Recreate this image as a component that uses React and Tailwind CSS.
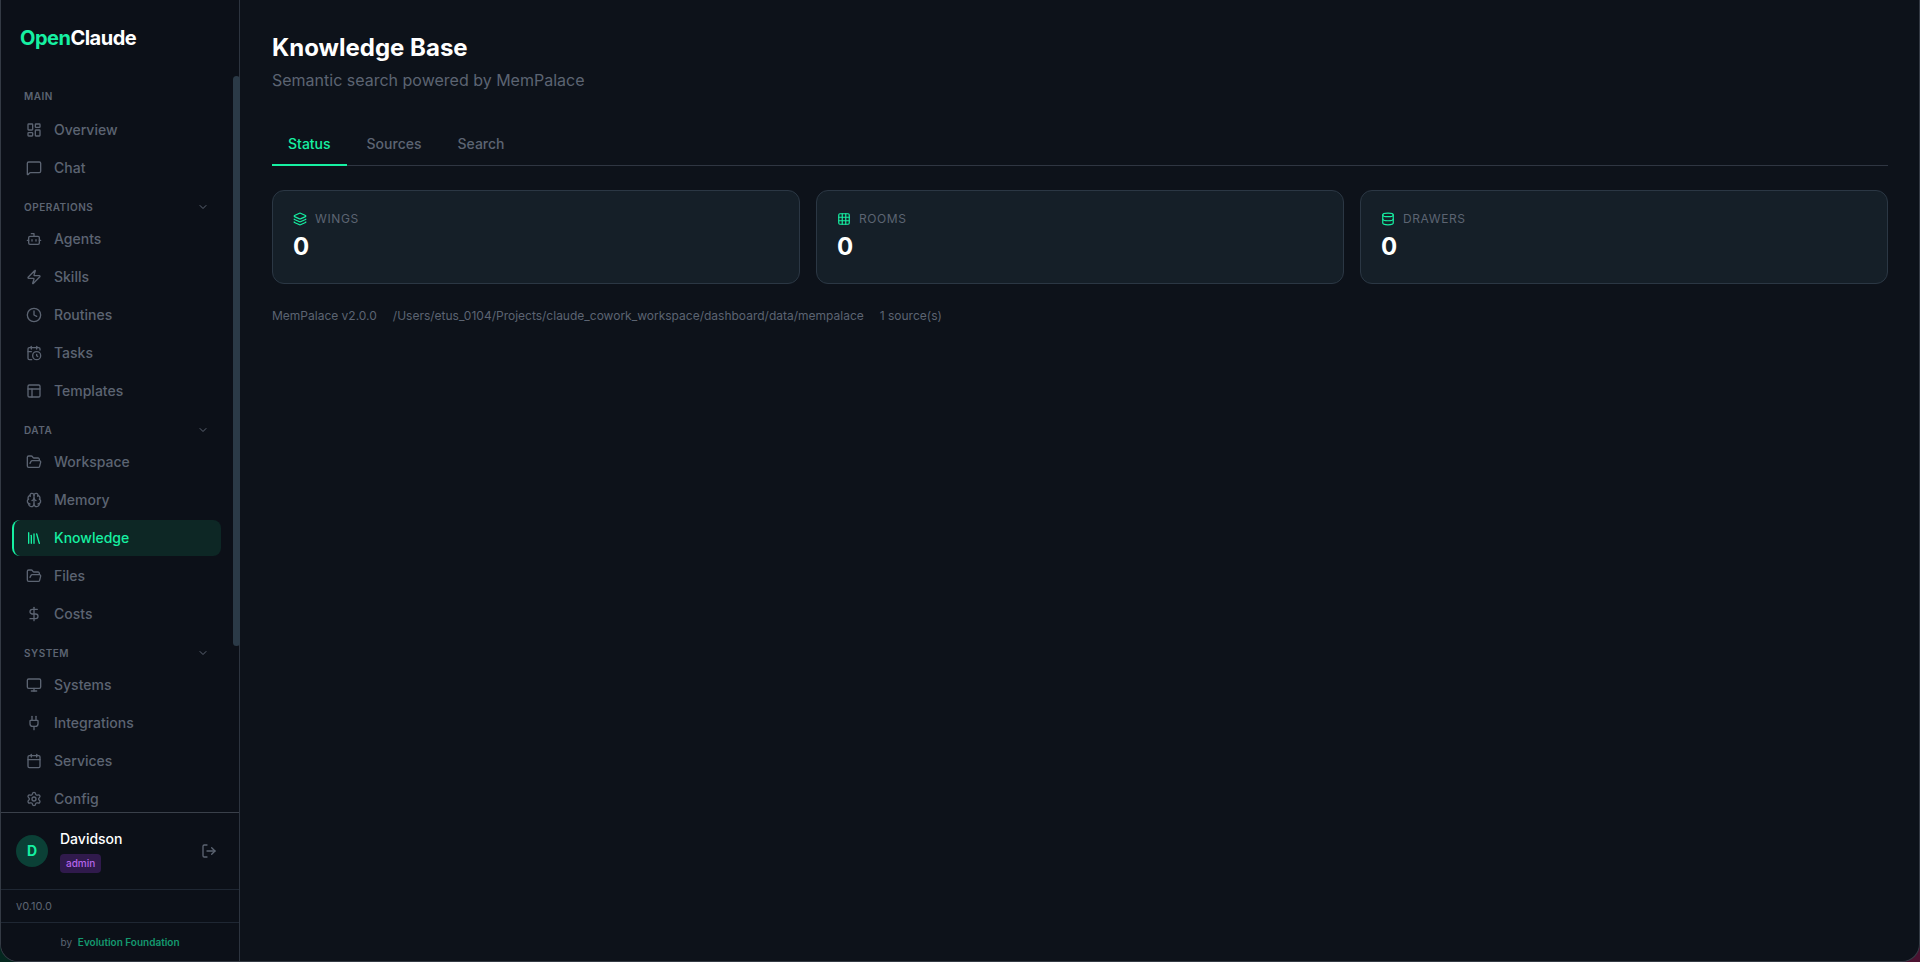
import { useState } from "react";
import {
  Bot,
  Brain,
  Calendar,
  CalendarClock,
  ChevronDown,
  Clock,
  Database,
  DollarSign,
  FolderOpen,
  Grid3x3,
  Layers,
  LayoutDashboard,
  Library,
  LogOut,
  MessageSquare,
  Monitor,
  PanelsTopLeft,
  Plug,
  Settings,
  Zap,
} from "lucide-react";

const navGroups = [
  {
    label: "Main",
    items: [
      { name: "Overview", icon: LayoutDashboard },
      { name: "Chat", icon: MessageSquare },
    ],
  },
  {
    label: "Operations",
    collapsible: true,
    items: [
      { name: "Agents", icon: Bot },
      { name: "Skills", icon: Zap },
      { name: "Routines", icon: Clock },
      { name: "Tasks", icon: CalendarClock },
      { name: "Templates", icon: PanelsTopLeft },
    ],
  },
  {
    label: "Data",
    collapsible: true,
    items: [
      { name: "Workspace", icon: FolderOpen },
      { name: "Memory", icon: Brain },
      { name: "Knowledge", icon: Library },
      { name: "Files", icon: FolderOpen },
      { name: "Costs", icon: DollarSign },
    ],
  },
  {
    label: "System",
    collapsible: true,
    items: [
      { name: "Systems", icon: Monitor },
      { name: "Integrations", icon: Plug },
      { name: "Services", icon: Calendar },
      { name: "Config", icon: Settings },
    ],
  },
];

const tabs = ["Status", "Sources", "Search"];

const stats = [
  { label: "Wings", value: 0, icon: Layers },
  { label: "Rooms", value: 0, icon: Grid3x3 },
  { label: "Drawers", value: 0, icon: Database },
];

const NavItem = ({ item, active }) => {
  const Icon = item.icon;
  return (
    <a
      href={`#${item.name.toLowerCase()}`}
      aria-current={active ? "page" : undefined}
      className={`flex items-center gap-3 px-3 py-2 rounded-lg border-l-2 text-sm font-medium ${
        active
          ? "border-[#16f0a2] bg-[#0d2725] text-[#16f0a2]"
          : "border-transparent text-[#5c6472] hover:text-gray-300"
      }`}
    >
      <Icon className="w-4 h-4" />
      {item.name}
    </a>
  );
};

const NavGroup = ({ group }) => {
  const [open, setOpen] = useState(true);

  return (
    <div>
      {group.collapsible ? (
        <button
          onClick={() => setOpen(!open)}
          aria-expanded={open}
          className="flex items-center justify-between w-full h-4 mt-[13px] mb-1.5 px-3 text-[10px] font-semibold uppercase tracking-wider text-[#5c6472]"
        >
          {group.label}
          <ChevronDown className="w-3 h-3" />
        </button>
      ) : (
        <p className="h-4 mt-3 mb-2 px-3 text-[10px] leading-4 font-semibold uppercase tracking-wider text-[#5c6472]">
          {group.label}
        </p>
      )}
      {open && (
        <div className="flex flex-col gap-0.5">
          {group.items.map((item) => (
            <NavItem
              key={item.name}
              item={item}
              active={item.name === "Knowledge"}
            />
          ))}
        </div>
      )}
    </div>
  );
};

const Sidebar = () => (
  <aside className="flex flex-col shrink-0 w-[239px] border-r border-[#2d343f] bg-[#0c1018]">
    <div className="px-[19px] py-6 text-xl font-bold tracking-tight text-white">
      <span className="text-[#16f0a2]">Open</span>Claude
    </div>

    <div className="flex flex-1 min-h-0">
      <nav className="flex-1 overflow-y-auto [scrollbar-width:none] pl-[11px] pr-3">
        {navGroups.map((group) => (
          <NavGroup key={group.label} group={group} />
        ))}
      </nav>
      {/* scroll thumb */}
      <div className="w-[7px] -mr-px h-[77.5%] rounded-full bg-[#2b3a47]" />
    </div>

    <div className="flex items-center gap-3 pl-[15px] pr-[22px] py-4 border-t border-[#3a404a]">
      <div className="flex items-center justify-center w-8 h-8 rounded-full bg-[#0b4036] text-sm font-bold text-[#16f0a2]">
        D
      </div>
      <div className="flex-1 flex flex-col items-start gap-[5px]">
        <p className="text-sm font-medium text-white">Davidson</p>
        <span className="h-[19px] px-1.5 rounded text-[10px] leading-[19px] font-medium bg-[#301a4c] text-[#b565ea]">
          admin
        </span>
      </div>
      <button aria-label="Log out" className="text-[#5c6472]">
        <LogOut className="w-4 h-4" />
      </button>
    </div>
    <p className="px-[15px] py-2 border-t border-[#1f2733] text-[11px] leading-4 text-[#5c6472]">
      v0.10.0
    </p>
    <p className="py-[11px] border-t border-[#1f2733] text-center text-[10px] leading-4 text-[#5c6472]">
      by{" "}
      <a href="#evolution" className="ml-[3px] font-semibold text-[#14996f]">
        Evolution Foundation
      </a>
    </p>
  </aside>
);

const StatCard = ({ stat }) => {
  const Icon = stat.icon;
  return (
    <div className="p-5 rounded-xl border border-[#2b3744] bg-[#151f28]">
      <div className="flex items-center gap-2 text-xs uppercase tracking-wider text-[#5c6472]">
        <Icon className="w-3.5 h-3.5 text-[#16f0a2]" />
        {stat.label}
      </div>
      <p className="mt-1 text-2xl font-bold text-white">{stat.value}</p>
    </div>
  );
};

const App = () => {
  const [tab, setTab] = useState("Status");

  return (
    <div className="h-screen bg-linear-to-r from-[#04271f] to-[#4a1230] font-['Inter',sans-serif]">
      <div className="flex h-full overflow-hidden rounded-b-[18px] border border-t-0 border-[#343a44] bg-[#0d121a]">
        <Sidebar />

        <main className="flex-1 py-8 pl-8 pr-[31px]">
          <h1 className="text-2xl font-bold text-white">Knowledge Base</h1>
          <p className="mt-1 text-base text-[#5c6472]">
            Semantic search powered by MemPalace
          </p>

          {/* Tabs */}
          <div
            role="tablist"
            className="flex gap-1 mt-8 mb-6 border-b border-[#2f3642]"
          >
            {tabs.map((name) => (
              <button
                key={name}
                role="tab"
                aria-selected={tab === name}
                onClick={() => setTab(name)}
                className={`-mb-px px-4 py-2.5 border-b-2 text-sm font-medium ${
                  tab === name
                    ? "border-[#16f0a2] text-[#16f0a2]"
                    : "border-transparent text-[#5c6472]"
                }`}
              >
                {name}
              </button>
            ))}
          </div>

          <div className="grid grid-cols-3 gap-4">
            {stats.map((stat) => (
              <StatCard key={stat.label} stat={stat} />
            ))}
          </div>

          <div className="flex gap-4 mt-6 text-xs text-[#5c6472]">
            <span>MemPalace v2.0.0</span>
            <span>
              /Users/etus_0104/Projects/claude_cowork_workspace/dashboard/data/mempalace
            </span>
            <span>1 source(s)</span>
          </div>
        </main>
      </div>
    </div>
  );
};

export default App;
